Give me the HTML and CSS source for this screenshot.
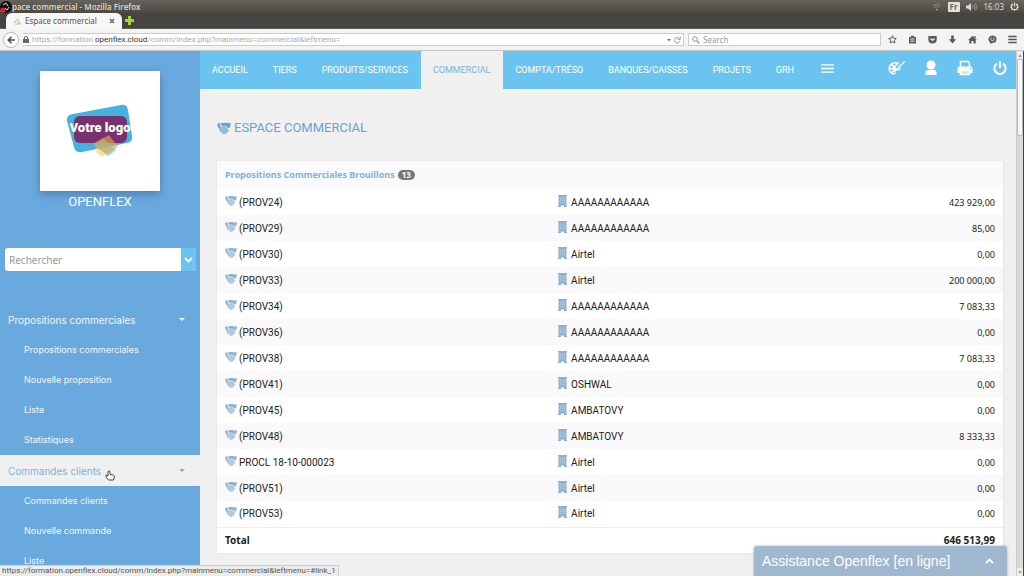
FILE: index.html
```html
<!DOCTYPE html>
<html lang="fr">
<head>
<meta charset="utf-8">
<title>Espace commercial</title>
<link rel="stylesheet" href="styles.css">
</head>
<body>
<svg class="defs" aria-hidden="true">
  <symbol id="shake" viewBox="0 0 14 13">
    <path d="M0 2 2.600 .8 3.600 5.500 1.400 6.300zM14 1.500 11.400.6 10.600 5.600 12.500 6.200z"/>
    <path d="M3 1.500C5 1.500 6 .6 7.500.8 9 .6 10 1.300 11.400 1L10.800 6 7.800 3.500 6 4.800 5 4z"/>
    <path d="M3.300 4.800 5 4.400 6 5.300 7.800 4.100 12 8 11.200 9.500 9.800 11 8.200 12 6.500 12.200 3 9.500 1.700 6.800z" opacity=".72"/>
    <path d="M4 8.500 6 6.800M5.500 10 7.500 8M7 11.400 9 9.300" stroke="#fff" stroke-width=".5" opacity=".6"/>
  </symbol>
  <symbol id="building" viewBox="0 0 9 12">
    <path d="M0 0h9v1H8.500v10H9v1H6v-1.500H3V12H0v-1h.5V1H0z"/>
    <path d="M2.500 2v7M4.500 2v7M6.500 2v7M1 3.500h7M1 5.500h7M1 7.500h7" stroke="#fff" stroke-width=".4" opacity=".4"/>
  </symbol>
</svg>
<header class="browser">
  <div class="titlebar">
    <svg class="rec" viewBox="0 0 12 12"><circle cx="6" cy="6" r="6" fill="#111"/><path d="M3 4 6 2 8 5M9 6 7 9 5 7" fill="none" stroke="#ddd"/><circle cx="3" cy="9" r="2.500" fill="#f01818"/></svg>
    <span class="wintitle">pace commercial - Mozilla Firefox</span>
    <div class="tray">
      <svg width="10" height="8" viewBox="0 0 10 8" fill="none" stroke="#8d8b83"><path d="M1 2.500Q5-.5 9 2.500M2.500 4.500Q5 2.500 7.500 4.500"/><path d="M4 6h2L5 7.500z" fill="#ddd" stroke="none"/></svg>
      <span class="lang">Fr</span>
      <svg width="12" height="8" viewBox="0 0 12 8"><path d="M0 2.500h2L5 0v8L2 5.500H0z" fill="#dfdbd2"/><path d="M6.500 2.500q1 1.500 0 3M8 1.500q2 2.500 0 5M9.500.5q3 3.500 0 7" fill="none" stroke="#a5a298" stroke-width=".8"/></svg>
      <span class="clock">16:03</span>
      <svg width="9" height="9" viewBox="0 0 9 9" fill="none" stroke="#dfdbd2"><path d="M3 2A3 3 0 1 0 6 2M4.500.5v4" stroke-width="1.200"/><path d="M4.500 8v1M0 5h1M8 5h1M1 8l1-1M8 8 7 7M1 2l1 1M8 2 7 3"/></svg>
    </div>
  </div>
  <div class="tabs">
    <div class="tab">
      <svg width="8" height="7" viewBox="0 0 8 7" fill="none" stroke="#a9bdb2"><path d="M1 5Q1 3 3 3 4 0 6 2M2 6h5L6 3.500 4 4"/></svg>
      <span class="tabname">Espace commercial</span>
      <button class="close" aria-label="Fermer l’onglet"><svg width="6" height="6" viewBox="0 0 6 6"><path d="M1 1l4 4M5 1 1 5" stroke="#666" stroke-width="1.500"/></svg></button>
    </div>
    <button class="newtab" aria-label="Nouvel onglet"><svg width="9" height="9" viewBox="0 0 9 9"><path d="M3 0h3v3h3v3H6v3H3V6H0V3h3z" fill="#a4d53a"/></svg></button>
  </div>
  <div class="toolbar">
    <button class="back" aria-label="Précédent"><svg width="8" height="8" viewBox="0 0 8 8" fill="none" stroke="#4c4c48" stroke-width="1.600"><path d="M4.500.7 1.200 4l3.300 3.300M1.500 4H8"/></svg></button>
    <div class="urlbar">
      <svg width="6" height="7" viewBox="0 0 6 7"><path d="M0 3h6v4H0z" fill="#666"/><path d="M1.300 3V2a1.700 1.500 0 0 1 3.400 0v1" fill="none" stroke="#666"/></svg>
      <span class="url">https://formation.<b>openflex.cloud</b>/comm/index.php?mainmenu=commercial&amp;leftmenu=</span>
      <svg width="14" height="8" viewBox="0 0 14 8"><path d="M0 3h4L2 5.500z" fill="#777"/><path d="M12.500 2.500A2.800 2.800 0 1 0 13 5M13.300.7V3.300H10.500" fill="none" stroke="#999"/></svg>
    </div>
    <label class="search"><svg width="8" height="8" viewBox="0 0 8 8" fill="none" stroke="#999"><circle cx="3" cy="3" r="2.300"/><path d="M4.700 4.700 7.500 7.500" stroke-width="1.300"/></svg><input type="text" placeholder="Search" aria-label="Search"></label>
    <div class="tools">
      <svg viewBox="0 0 9 9" fill="none" stroke="#5c5b57"><path d="M4.500.8 5.600 3.200 8.300 3.500 6.300 5.300 6.900 8 4.500 6.700 2.100 8 2.700 5.300.7 3.500 3.400 3.200z"/></svg>
      <svg viewBox="0 0 9 9"><path d="M1 2h2V.8h3V2h2v6.500H1z" fill="#5c5b57"/><path d="M2.500 4h4M2.500 6.200h4" stroke="#f2f1ef"/></svg>
      <svg viewBox="0 0 9 9"><path d="M.3 1h8.400v3.500a4.200 4 0 0 1-8.400 0z" fill="#5c5b57"/><path d="M2.500 3.500l2 2 2-2" fill="none" stroke="#f2f1ef" stroke-width="1.200"/></svg>
      <svg viewBox="0 0 9 9"><path d="M3.200.5h2.600v3.700h2.400L4.500 8.500.8 4.200h2.400z" fill="#5c5b57"/></svg>
      <svg viewBox="0 0 9 9"><path d="M4.500.8 8.800 5H7.700v3.500H5.500V6h-2v2.500H1.300V5H.2zM6.500 1h1.200v2H6.500z" fill="#5c5b57"/></svg>
      <svg viewBox="0 0 9 9"><path d="M4.500.6a4 3.700 0 0 1 0 7.400L2 8.800V7.200A4 3.700 0 0 1 4.500.6z" fill="#5c5b57"/><path d="M2.300 4.500q2.200 2.500 4.400 0M2.500 3h1.200M5.300 3h1.200" fill="none" stroke="#f2f1ef" stroke-width=".9"/></svg>
      <svg viewBox="0 0 9 9"><path d="M.3 1.500h8.400M.3 4.500h8.400M.3 7.500h8.400" stroke="#555" stroke-width="1.700"/></svg>
    </div>
  </div>
</header>
<div class="app">
  <aside class="side">
    <div class="logo">
      <svg width="70" height="54" viewBox="0 0 70 54" role="img" aria-label="Votre logo">
        <path d="M8 10 56 1Q62 0 63 6L67 32Q68 38 62 39L17 48Q10 49 9 43L2 17Q1 11 8 10z" fill="#45b1df"/>
        <rect x="9" y="12" width="53" height="27" rx="6" fill="#79306f"/>
        <path d="M29 41 38 34 51 46 43 52z" fill="#74c3e6" opacity=".7"/>
        <path d="M29 39 44 31 53 43 38 52 33 49z" fill="#dcaa45" opacity=".65"/>
        <path d="M32 44 41 50 36 53 31 48z" fill="#ffe79a" opacity=".8"/>
        <text x="35" y="28" text-anchor="middle" class="logotext">Votre logo</text>
      </svg>
    </div>
    <div class="brand">OPENFLEX</div>
    <div class="find"><input type="text" placeholder="Rechercher" aria-label="Rechercher"><button aria-label="Choisir"><svg width="9" height="6" viewBox="0 0 9 6"><path d="M1 1l3.500 3.500L8 1" fill="none" stroke="#fff" stroke-width="1.800"/></svg></button></div>
    <nav class="menu">
      <a class="group" href="#link_0">Propositions commerciales<i class="caret"></i></a>
      <a class="item" href="#p1">Propositions commerciales</a>
      <a class="item" href="#p2">Nouvelle proposition</a>
      <a class="item" href="#p3">Liste</a>
      <a class="item" href="#p4">Statistiques</a>
      <a class="group hover" href="#link_1">Commandes clients<i class="caret"></i></a>
      <a class="item" href="#c1">Commandes clients</a>
      <a class="item" href="#c2">Nouvelle commande</a>
      <a class="item" href="#c3">Liste</a>
    </nav>
  </aside>
  <main class="main">
    <nav class="topnav">
      <a href="#n1">ACCUEIL</a><a href="#n2">TIERS</a><a href="#n3">PRODUITS/SERVICES</a><a class="on" href="#n4">COMMERCIAL</a><a href="#n5">COMPTA/TRÉSO</a><a href="#n6">BANQUES/CAISSES</a><a href="#n7">PROJETS</a><a href="#n8">GRH</a>
      <button class="burger" aria-label="Menu"><svg width="13" height="9" viewBox="0 0 13 9"><path d="M0 .8h13M0 4.500h13M0 8.200h13" stroke="#fff" stroke-width="1.300"/></svg></button>
      <div class="actions">
        <button aria-label="Thème"><svg width="17" height="16" viewBox="0 0 17 16"><path d="M8 2C3 2 .5 5 .5 8.500S3 14.500 6 14.500c2 0 1.500-1.500 1.500-2.500S8.500 10.500 10 10.500s3-1 2.500-3L10 9 7.500 8 8 6l3.500-3Q10 2 8 2z" fill="#fff"/><path d="M16.500.8 9.500 7.500 8 9l3-1 6-6z" fill="#fff"/><g fill="#6bc4f0"><circle cx="3.500" cy="7" r="1.200"/><circle cx="3.500" cy="10.500" r="1.200"/><circle cx="6.500" cy="4.500" r="1.200"/><circle cx="6" cy="12.500" r=".9"/></g></svg></button>
        <button aria-label="Utilisateur"><svg width="12" height="16" viewBox="0 0 12 16" fill="#fff"><circle cx="6" cy="5" r="4.500"/><path d="M.5 15v-2.500q0-2.500 3-2.500h5q3 0 3 2.500V15z"/></svg></button>
        <button aria-label="Imprimer"><svg width="16" height="16" viewBox="0 0 16 16"><path d="M3.500 7V1.500h7.500l1.500 1.500v4" fill="none" stroke="#fff" stroke-width="1.500"/><path d="M2.500 6.500h11q2 0 2 2V13H.5V8.500q0-2 2-2z" fill="#fff"/><path d="M3.500 10.500h9V14.500h-9z" fill="#c9e8fa" stroke="#fff" stroke-width="1.500"/><circle cx="13.500" cy="8.700" r=".7" fill="#6bc4f0"/></svg></button>
        <button aria-label="Déconnexion"><svg width="14" height="16" viewBox="0 0 14 16" fill="none" stroke="#fff" stroke-width="2"><path d="M4 3.600a5.600 5.600 0 1 0 6 0M7 1v7"/></svg></button>
      </div>
    </nav>
    <section class="content">
      <h1><svg width="14" height="13"><use href="#shake"/></svg>ESPACE COMMERCIAL</h1>
      <table class="list">
        <colgroup><col class="c-ref"><col class="c-client"><col></colgroup>
        <thead><tr><th colspan="3"><a href="#all">Propositions Commerciales Brouillons</a><span class="badge">13</span></th></tr></thead>
        <tbody id="rows"></tbody>
        <tfoot><tr><td colspan="2">Total</td><td class="num">646 513,99</td></tr></tfoot>
      </table>
    </section>
  </main>
  <div class="scroll"><span class="end">▴</span><span class="thumb"></span><span class="end foot">▾</span></div>
</div>
<svg class="cursor" viewBox="0 0 10 11"><path d="M1 5 3 6V1.500Q4 .3 5 1.500V4.500L8.500 5.200Q9.500 5.500 9.300 7L8.500 10H3.500L1 7z" fill="#fff" stroke="#333" stroke-width=".9"/></svg>
<div class="status">https://formation.openflex.cloud/comm/index.php?mainmenu=commercial&amp;leftmenu=#link_1</div>
<button class="chat">Assistance Openflex [en ligne]<svg width="9" height="6" viewBox="0 0 9 6"><path d="M1 5l3.500-3.500L8 5" fill="none" stroke="#fff" stroke-width="1.800"/></svg></button>
<script src="rows.js"></script>
</body>
</html>
```
FILE: styles.css
```css
* { box-sizing: border-box; }
body { margin: 0; height: 100vh; display: flex; flex-direction: column; overflow: hidden; background: #f0f0f0; font: 10px/14px Roboto, sans-serif; color: #333; }
a { color: inherit; text-decoration: none; }
button { border: 0; padding: 0; background: none; font: inherit; color: inherit; display: flex; align-items: center; justify-content: center; }
input { border: 0; padding: 0; min-width: 0; background: none; font: inherit; outline: 0; }
svg { flex: none; }
.defs { position: absolute; width: 0; height: 0; }

.browser { flex: none; font: 8px/12px "Noto Sans", sans-serif; border-bottom: 1px solid #c4c8c6; }
.titlebar { height: 13px; display: flex; align-items: center; background: linear-gradient(#65645b, #4b4943); color: #dfdbd2; }
.rec { width: 12px; height: 12px; }
.wintitle { font-weight: 600; font-family: "Open Sans", sans-serif; }
.tray { margin-left: auto; padding-right: 5px; display: flex; align-items: center; gap: 6px; }
.lang { background: #e4e1da; color: #666; font-weight: bold; line-height: 10px; padding: 0 2px; border-radius: 1px; }
.tabs { height: 16px; padding-left: 6px; display: flex; background: #454440; border-bottom: 1px solid #5c5a55; }
.tab { width: 116px; height: 16px; display: flex; align-items: center; gap: 4px; padding: 0 7px; background: #f7f7f5; border-radius: 6px 6px 0 0; color: #555; }
.tabname { flex: 1; }
.newtab { padding-left: 3px; }
.toolbar { height: 21px; display: flex; align-items: center; gap: 4px; padding: 0 7px 0 3px; background: #f3f3f1; }
.back { width: 16px; height: 16px; border: 1px solid #bbb; border-radius: 8px; background: #fff; }
.urlbar { flex: 1; height: 13px; display: flex; align-items: center; gap: 3px; padding: 0 2px 0 0; background: #fff; border: 1px solid #ccc; border-left: 0; color: #aaa; }
.url { flex: 1; white-space: nowrap; font-family: Roboto, sans-serif; }
.url b { font-weight: normal; color: #333; }
.search { width: 193px; height: 13px; display: flex; align-items: center; gap: 3px; padding: 0 3px; background: #fff; border: 1px solid #ccc; }
.search input { flex: 1; color: #777; }
.search input::placeholder { color: #999; }
.tools { display: flex; gap: 11px; padding-left: 3px; }
.tools svg { width: 9px; height: 9px; }

.app { flex: 1; min-height: 0; display: flex; }
.side { width: 200px; flex: none; overflow: hidden; background: #6aa9de; color: #fff; }
.logo { width: 120px; height: 120px; margin: 20px auto 0; display: flex; align-items: center; justify-content: center; background: #fff; box-shadow: 0 3px 8px rgba(30, 60, 100, .4); }
.logo svg { overflow: visible; }
.logotext { font: 900 13px Roboto, sans-serif; fill: #fff; }
.brand { text-align: center; font-size: 13px; line-height: 22px; }
.find { height: 23px; margin: 35px 4px 0 5px; display: flex; background: #fff; border-radius: 3px; overflow: hidden; font: 10px "Noto Sans", sans-serif; }
.find input { flex: 1; padding: 0 4px; }
.find input::placeholder { color: #999; }
.find button { width: 15px; background: #6bc4f0; }
.menu { padding-top: 33px; }
.menu a { display: flex; align-items: center; font-family: Inter, sans-serif; color: #f2f7fc; }
.menu .group { height: 31px; padding: 0 15px 0 8px; font-size: 10px; }
.menu .item { height: 30px; padding-left: 24px; font-size: 9px; }
.caret { margin-left: auto; border: 3px solid transparent; border-top-color: currentColor; border-bottom: 0; }
.menu .hover { background: #f0f0f0; color: #7fb0d8; }

.main { flex: 1; min-width: 0; overflow: hidden; }
.topnav { height: 38px; display: flex; background: #6bc4f0; color: #fff; font-size: 9px; }
.topnav a { padding: 0 13px 0 12px; display: flex; align-items: center; }
.topnav .on { background: #f0f0f0; color: #7fb0d8; }
.burger { padding: 0 14px; height: 34px; }
.actions { margin-left: auto; height: 34px; padding-right: 9px; display: flex; gap: 20px; }
.content { padding: 29px 13px 0 17px; }
h1 { margin: 0 0 23px; display: flex; align-items: center; gap: 3px; font-size: 13px; font-weight: normal; line-height: 20px; color: #6ba3d0; }
h1 svg, .list svg { fill: #6ba3d0; }
.list { width: 100%; border-collapse: collapse; background: #fff; table-layout: fixed; box-shadow: 0 0 3px rgba(0, 0, 0, .08); color: #222; }
.c-ref { width: 42%; }
.c-client { width: 36%; }
.list th, .list td { height: 26px; padding: 1px 8px 0; text-align: left; }
.list th { height: 28px; padding-top: 0; background: #fafafa; color: #7fb2d8; font: bold 9px/14px "Noto Sans", sans-serif; }
.badge { margin-left: 3px; padding: 0 4px; border-radius: 5px; background: #777; color: #fff; font-size: 8px; line-height: 10px; display: inline-block; }
.list tbody tr:nth-child(even) { background: #f9f9f9; }
.cell { display: flex; align-items: center; gap: 2px; }
.list .cell svg { width: 12px; height: 12px; fill: #8fb0cd; margin-bottom: 4px; }
.list .cell .bld { width: 9px; margin: 0 2px 4px 3px; }
.list .num { text-align: right; font-family: "Noto Sans", sans-serif; font-size: 9px; }
.list tfoot td { padding-top: 0; border-top: 1px solid #eee; font-weight: bold; font-family: "Noto Sans", sans-serif; }
.list tfoot .num { font-size: 10px; }

.scroll { width: 8px; flex: none; display: flex; flex-direction: column; background: #dcdad6; border-right: 1px solid #444; border-left: 1px solid #ccc; }
.end { height: 8px; font: 6px/8px "DejaVu Sans", sans-serif; text-align: center; color: #999; background: #eee; }
.thumb { height: 77px; border: 1px solid #bbb; border-radius: 2px; background: #f7f7f6; }
.foot { margin-top: auto; }
.cursor { position: absolute; left: 105px; top: 470px; width: 10px; height: 11px; }
.status { position: absolute; left: 0; bottom: 0; padding: 0 2px; font: 8px/10px Roboto, sans-serif; background: #ececea; border: 1px solid #d0d0d0; border-left: 0; border-bottom: 0; color: #555; }
.chat { position: absolute; right: 17px; bottom: 0; width: 253px; height: 30px; padding: 0 13px 0 8px; justify-content: space-between; background: #9fb7cf; border-radius: 3px 3px 0 0; box-shadow: 0 0 3px rgba(0, 0, 0, .3); color: #fff; font: 14px "Liberation Sans", sans-serif; }
```
FILE: rows.js
```javascript
const rows = [
  ["(PROV24)", "AAAAAAAAAAAA", "423 929,00"],
  ["(PROV29)", "AAAAAAAAAAAA", "85,00"],
  ["(PROV30)", "Airtel", "0,00"],
  ["(PROV33)", "Airtel", "200 000,00"],
  ["(PROV34)", "AAAAAAAAAAAA", "7 083,33"],
  ["(PROV36)", "AAAAAAAAAAAA", "0,00"],
  ["(PROV38)", "AAAAAAAAAAAA", "7 083,33"],
  ["(PROV41)", "OSHWAL", "0,00"],
  ["(PROV45)", "AMBATOVY", "0,00"],
  ["(PROV48)", "AMBATOVY", "8 333,33"],
  ["PROCL 18-10-000023", "Airtel", "0,00"],
  ["(PROV51)", "Airtel", "0,00"],
  ["(PROV53)", "Airtel", "0,00"]
];
document.getElementById("rows").innerHTML = rows.map(([ref, client, amount]) => `<tr>
  <td><a class="cell" href="#ref"><svg viewBox="0 0 14 13"><use href="#shake"/></svg>${ref}</a></td>
  <td><a class="cell" href="#client"><svg class="bld"><use href="#building"/></svg>${client}</a></td>
  <td class="num">${amount}</td></tr>`).join("");
```
